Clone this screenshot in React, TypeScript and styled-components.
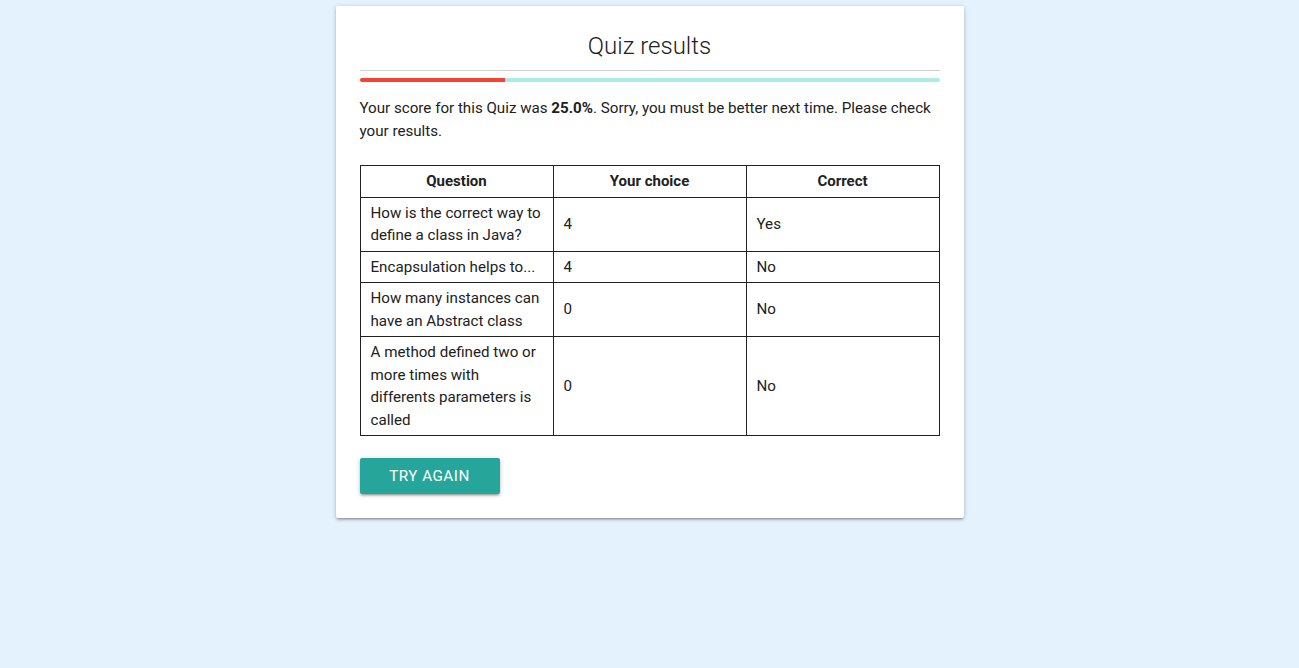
import styled, { createGlobalStyle } from "styled-components";

const TEXT = "#212121";
const TEAL = "#26a69a";

type Row = { question: string; choice: string; correct: string };

const rows: Row[] = [
  { question: "How is the correct way to define a class in Java?", choice: "4", correct: "Yes" },
  { question: "Encapsulation helps to...", choice: "4", correct: "No" },
  { question: "How many instances can have an Abstract class", choice: "0", correct: "No" },
  {
    question: "A method defined two or more times with differents parameters is called",
    choice: "0",
    correct: "No",
  },
];

const score = 25;

function App() {
  return (
    <>
      <GlobalStyle />
      <Page>
        <Card>
          <Title>Quiz results</Title>
          <Divider />
          <Progress>
            <ProgressFill style={{ width: `${score}%` }} />
          </Progress>
          <Summary>
            Your score for this Quiz was <b>{score.toFixed(1)}%</b>. Sorry, you must be better next
            time. Please check your results.
          </Summary>
          <Table>
            <thead>
              <tr>
                <Th>Question</Th>
                <Th>Your choice</Th>
                <Th>Correct</Th>
              </tr>
            </thead>
            <tbody>
              {rows.map((r) => (
                <tr key={r.question}>
                  <Td>{r.question}</Td>
                  <Td>{r.choice}</Td>
                  <Td>{r.correct}</Td>
                </tr>
              ))}
            </tbody>
          </Table>
          <Button type="button">Try again</Button>
        </Card>
      </Page>
    </>
  );
}

export default App;

const GlobalStyle = createGlobalStyle`
  html, body {
    margin: 0;
    padding: 0;
    background: #e3f2fd;
    font-family: Roboto, "Liberation Sans", sans-serif;
    color: ${TEXT};
  }
  * { box-sizing: border-box; }
`;

const Page = styled.div`
  min-height: 668px;
  display: flex;
  justify-content: center;
  padding-top: 6px;
`;

const Card = styled.div`
  width: 628px;
  align-self: flex-start;
  background: #fff;
  padding: 24px;
  border-radius: 2px;
  box-shadow: 0 2px 2px 0 rgba(0, 0, 0, 0.14), 0 3px 1px -2px rgba(0, 0, 0, 0.12),
    0 1px 5px 0 rgba(0, 0, 0, 0.2);
`;

const Title = styled.h1`
  margin: 0;
  font-size: 24px;
  font-weight: 300;
  line-height: 32px;
  text-align: center;
`;

const Divider = styled.div`
  margin-top: 8px;
  height: 1px;
  background: #d0d0d0;
`;

const Progress = styled.div`
  margin-top: 7px;
  height: 4px;
  border-radius: 2px;
  background: #acece6;
  overflow: hidden;
`;

const ProgressFill = styled.div`
  height: 100%;
  background: #f44336;
`;

const Summary = styled.p`
  margin: 15px 0 0;
  font-size: 15.15px;
  line-height: 23px;

  b {
    font-weight: 700;
  }
`;

const Table = styled.table`
  margin-top: 22px;
  width: 100%;
  border-collapse: collapse;
  table-layout: fixed;
  font-size: 15.15px;
  line-height: 22.5px;
`;

const Th = styled.th`
  border: 1px solid ${TEXT};
  padding: 4px 10px;
  font-size: 15px;
  font-weight: 700;
  text-align: center;
`;

const Td = styled.td`
  border: 1px solid ${TEXT};
  padding: 4px 10px;
  text-align: left;
  vertical-align: middle;
`;

const Button = styled.button`
  margin-top: 22px;
  display: block;
  width: 140px;
  height: 36px;
  padding: 0;
  border: none;
  border-radius: 2px;
  background: ${TEAL};
  color: #fff;
  font-family: Roboto, "Liberation Sans", sans-serif;
  font-size: 15.2px;
  letter-spacing: 0.5px;
  text-transform: uppercase;
  cursor: pointer;
  box-shadow: 0 2px 2px 0 rgba(0, 0, 0, 0.14), 0 3px 1px -2px rgba(0, 0, 0, 0.12),
    0 1px 5px 0 rgba(0, 0, 0, 0.2);
`;
